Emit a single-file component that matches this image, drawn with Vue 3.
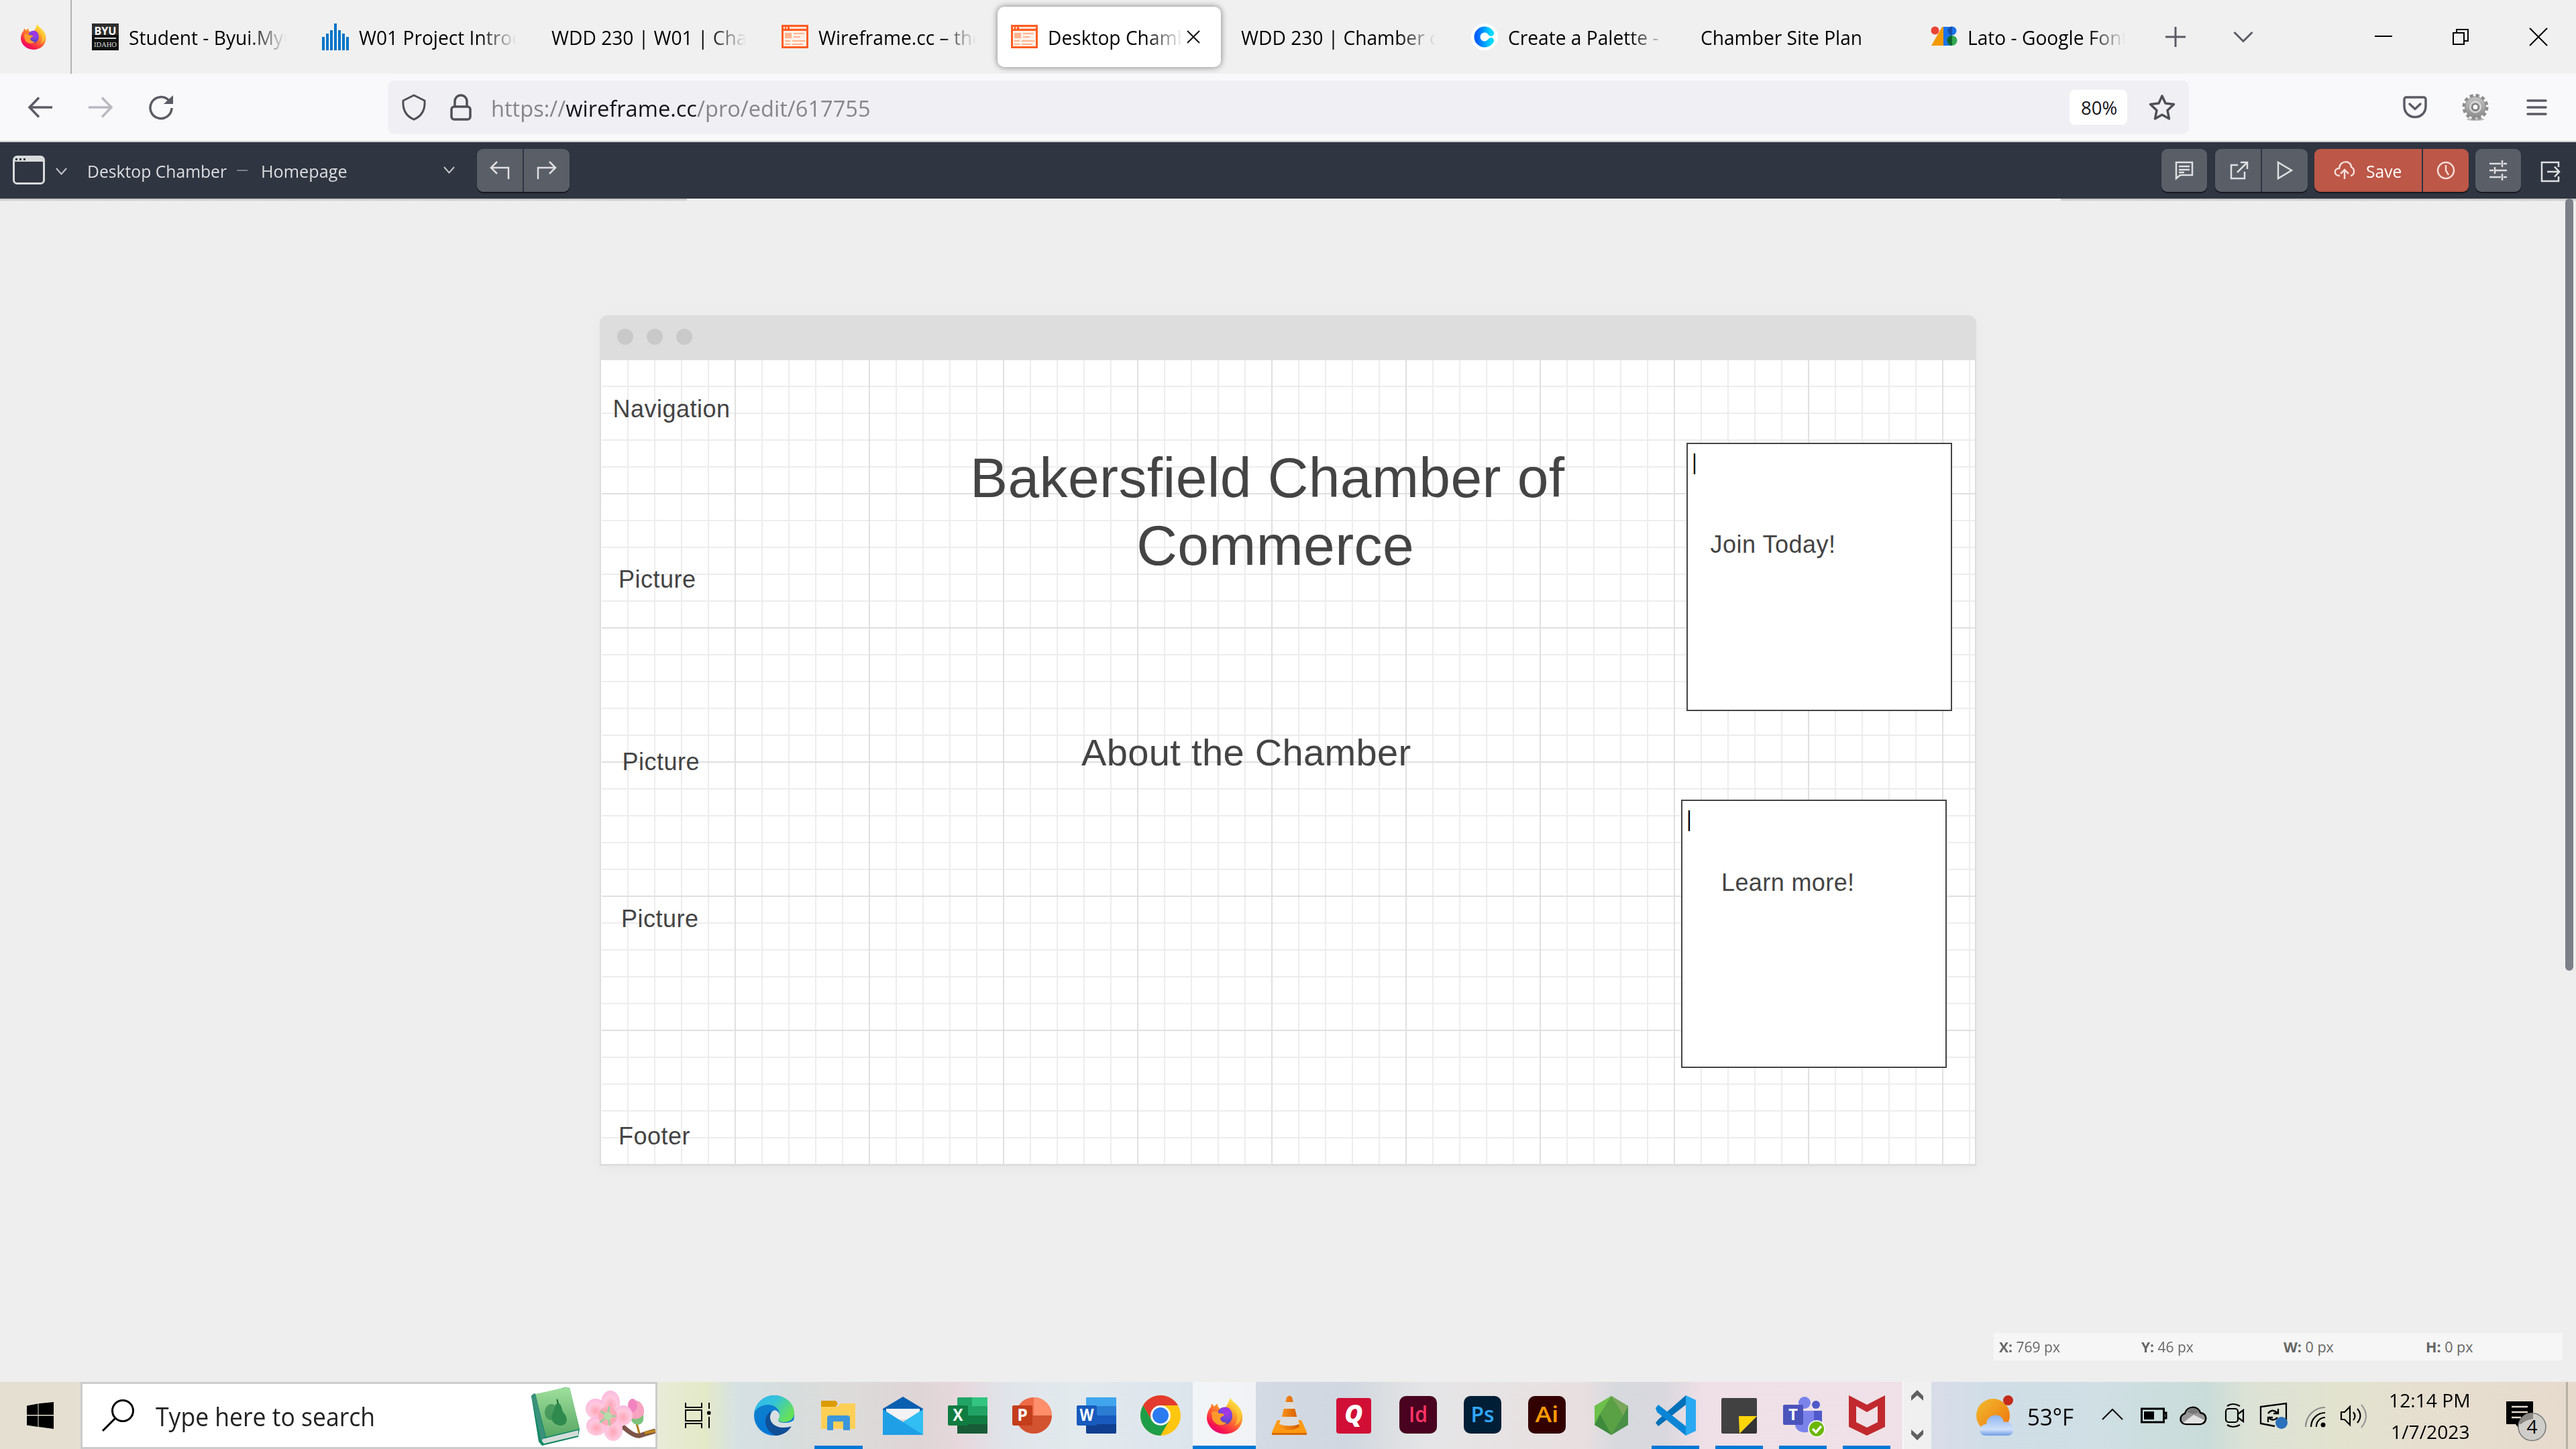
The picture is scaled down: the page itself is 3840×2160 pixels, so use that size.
<script setup>
const tabs = [
  { icon: 'byu', title: 'Student - Byui.MyC' },
  { icon: 'bars', title: 'W01 Project Introd' },
  { icon: '', title: 'WDD 230 | W01 | Char' },
  { icon: 'wire', title: 'Wireframe.cc – the' },
  { icon: 'wire', title: 'Desktop Chamb', active: true },
  { icon: '', title: 'WDD 230 | Chamber of' },
  { icon: 'coolors', title: 'Create a Palette - C' },
  { icon: '', title: 'Chamber Site Plan' },
  { icon: 'gfonts', title: 'Lato - Google Font' },
]

const labels = [
  { text: 'Navigation', x: 17.5, y: 52 },
  { text: 'Picture', x: 26, y: 306 },
  { text: 'Picture', x: 31.5, y: 578 },
  { text: 'Picture', x: 30, y: 812 },
  { text: 'Footer', x: 26, y: 1136 },
]

const coords = [
  { k: 'X:', v: '769 px', w: 91 },
  { k: 'Y:', v: '46 px', w: 78 },
  { k: 'W:', v: '0 px', w: 75 },
  { k: 'H:', v: '0 px', w: 70 },
]

const apps = [
  { id: 'edge' }, { id: 'explorer', open: true }, { id: 'mail' },
  { id: 'excel' },
  { id: 'ppt' },
  { id: 'word' },
  { id: 'chrome' }, { id: 'firefox', current: true }, { id: 'vlc' }, { id: 'quicken' },
  { id: 'adobe', letter: 'Id', bg: '#49021f', fg: '#ff3366' },
  { id: 'adobe', letter: 'Ps', bg: '#001e36', fg: '#31a8ff' },
  { id: 'adobe', letter: 'Ai', bg: '#330000', fg: '#ff9a00' },
  { id: 'node-js' }, { id: 'code', open: true }, { id: 'notes', open: true },
  { id: 'teams', open: true }, { id: 'mcafee', open: true },
]

// Condenses a text run to a given advance width.
const vFit = {
  mounted(el, { value }) {
    const natural = el.offsetWidth
    el.style.transform = `scaleX(${value / natural})`
    el.style.marginRight = `${value - natural}px`
  },
}
</script>

<template>
  <div class="screen">
    <svg width="0" height="0" class="defs">
      <defs>
        <linearGradient id="ffBody" x1=".85" y1=".05" x2=".25" y2="1">
          <stop offset="0" stop-color="#fff44f" /><stop offset=".3" stop-color="#ffb02a" />
          <stop offset=".6" stop-color="#ff5a36" /><stop offset=".85" stop-color="#f6134f" /><stop offset="1" stop-color="#e00087" />
        </linearGradient>
        <radialGradient id="ffGlobe" cx=".6" cy=".25" r=".8">
          <stop offset="0" stop-color="#b833e1" /><stop offset=".5" stop-color="#7a45e0" /><stop offset="1" stop-color="#4a3fb0" />
        </radialGradient>
        <symbol id="firefox" viewBox="0 0 54 54">
          <path d="M35 0c2 5 8 8 12 13 4 5 7 11 6 19-1 13-12 22-26 22S1 44 0 31c0-8 3-14 6-17l1-5c2 1 3 3 4 4 2-2 3-3 5-4 0 3 1 5 3 7 4 0 7 0 9-2 3-3 4-8 7-14z" fill="url(#ffBody)" />
          <path d="M16 25c0-7 5-11 11-11 7 0 11 6 11 13s-5 13-11 13-11-6-11-15z" fill="url(#ffGlobe)" />
          <path d="M7 22c4-3 8-2 11 1 3 1 6 0 8 2-1 3-5 3-6 6 1 4 5 7 10 6-6 7-19 4-22-6z" fill="#ff9a2b" />
          <path d="M22 16c5-3 11-1 14 3-3 0-4 0-6 2-3 0-6-2-8-5z" fill="#9a35e6" />
          <path d="M40 15c7 8 7 20 1 27 12-5 13-18 8-26-3-2-6-2-9-1z" fill="#ffd23e" opacity=".65" />
        </symbol>
        <linearGradient id="edgeA" x1="0" y1="0" x2="1" y2=".5"><stop offset="0" stop-color="#35b8f1" /><stop offset=".5" stop-color="#33c3d8" /><stop offset="1" stop-color="#66e05a" /></linearGradient>
        <linearGradient id="edgeB" x1="0" y1="0" x2=".4" y2="1"><stop offset="0" stop-color="#1581c9" /><stop offset="1" stop-color="#0078d7" /></linearGradient>
        <linearGradient id="coolG" x1="0" x2="1"><stop offset="0" stop-color="#0062ff" /><stop offset="1" stop-color="#00d8ff" /></linearGradient>
        <linearGradient id="sunG" x1="0" y1="0" x2="1" y2="1"><stop offset="0" stop-color="#f2bd2e" /><stop offset="1" stop-color="#ee6f0c" /></linearGradient>
        <linearGradient id="cloudG" x1="0" y1="0" x2="0" y2="1"><stop offset="0" stop-color="#8db4f0" /><stop offset=".7" stop-color="#cfe0fa" /><stop offset="1" stop-color="#6f9be6" /></linearGradient>
        <linearGradient id="coneG" x1="0" x2="1"><stop offset="0" stop-color="#ff9a1c" /><stop offset="1" stop-color="#d45a00" /></linearGradient>
        <linearGradient id="bookG" x1="0" y1="0" x2="0" y2="1"><stop offset="0" stop-color="#9fdf9c" /><stop offset="1" stop-color="#58a763" /></linearGradient>
        <linearGradient id="gearG" x1="0" y1="0" x2="0" y2="1"><stop offset="0" stop-color="#c4c4c4" /><stop offset="1" stop-color="#8c8c8c" /></linearGradient>
        <radialGradient id="petalG" cx=".5" cy=".6" r=".6"><stop offset="0" stop-color="#ffa3b4" /><stop offset=".6" stop-color="#ffc9de" /><stop offset="1" stop-color="#fbb8de" /></radialGradient>
      </defs>
    </svg>

    <!-- Tab strip -->
    <header class="tabstrip">
      <div class="pinned"><svg width="38" height="40"><use href="#firefox" /></svg></div>
      <div class="tabs">
        <div v-for="(t, i) in tabs" :key="i" class="tab" :class="{ active: t.active }">
          <svg v-if="t.icon === 'byu'" class="fav" width="40" height="40">
            <rect width="40" height="40" fill="#111" /><rect width="40" height="17" fill="#2e2e2e" />
            <rect x="4" y="21" width="32" height="2" fill="#ddd" />
            <text x="20" y="17" text-anchor="middle" font-size="16" font-weight="700" fill="#fff" textLength="33" lengthAdjust="spacingAndGlyphs">BYU</text>
            <text x="20" y="35" text-anchor="middle" font-size="11" fill="#ddd" font-family="Liberation Serif, serif" textLength="34" lengthAdjust="spacingAndGlyphs">IDAHO</text>
          </svg>
          <svg v-else-if="t.icon === 'bars'" class="fav" width="40" height="40" fill="#0374c8">
            <path d="M0 20h4v20H0zM6 15h4v25H6zM12 10h4v30h-4zM18 0h4v40h-4zM24 10h4v30h-4zM30 15h4v25h-4zM36 20h4v20h-4z" />
          </svg>
          <svg v-else-if="t.icon === 'wire'" class="fav" width="40" height="36">
            <rect width="40" height="35" fill="#ff5d22" /><rect x="3" y="9" width="34" height="23" fill="#fff0e8" />
            <path d="M3 3h2v3H3zM7 3h2v3H7zM12 3h25v3H12z" fill="#ffe3d6" />
            <path d="M5 12h10v8H5zM18 12h16v2H18zM18 17h10v2H18zM5 23h8v2H5zM16 23h19v2H16zM5 28h8v2H5zM16 28h16v2H16z" fill="#ffb48f" />
          </svg>
          <svg v-else-if="t.icon === 'coolors'" class="fav" width="40" height="40">
            <circle cx="20" cy="20" r="20" fill="#fff" />
            <path d="M29.500 14.500A11 11 0 1 0 29.500 25.500" fill="none" stroke="url(#coolG)" stroke-width="9" stroke-linecap="round" />
          </svg>
          <svg v-else-if="t.icon === 'gfonts'" class="fav" width="40" height="40">
            <path d="M17 5h3v28H15.500L14 33H1z" fill="#f29900" /><circle cx="6.500" cy="10.500" r="6" fill="#ea4335" />
            <path d="M19 5h13v28H19z" fill="#1a73e8" /><circle cx="32" cy="11" r="6.500" fill="#1a73e8" /><path d="M32 4.500a6.500 6.500 0 0 0 0 13z" fill="#174ea6" />
            <circle cx="32" cy="25.500" r="7.500" fill="#34a853" /><path d="M32 18a7.500 7.500 0 0 0 0 15z" fill="#0d652d" />
          </svg>
          <div class="title"><span>{{ t.title }}</span></div>
          <svg v-if="t.active" class="x" width="20" height="20" stroke="#111" stroke-width="2"><path d="M1 1l18 18M19 1L1 19" /></svg>
        </div>
      </div>
      <svg class="plus" width="30" height="30" stroke="#5b5b66" stroke-width="3"><path d="M15 0v30M0 15h30" /></svg>
      <svg class="alltabs" width="30" height="18" fill="none" stroke="#5b5b66" stroke-width="3"><path d="M1.500 2L15 15.500 28.500 2" /></svg>
      <svg class="min" width="26" height="26" stroke="#000" stroke-width="2"><path d="M0 12h26" /></svg>
      <svg class="restore" width="24" height="26" fill="none" stroke="#000" stroke-width="2"><path d="M1 7h16v17H1zM6 7V2h17v17h-6" /></svg>
      <svg class="close" width="26" height="26" stroke="#000" stroke-width="2"><path d="M0 0l26 26M26 0L0 26" /></svg>
    </header>

    <!-- Navigation bar -->
    <nav class="navbar">
      <svg class="back" width="36" height="32" fill="none" stroke="#5b5b66" stroke-width="3.500"><path d="M36 16H3M16 1.500L2 16l14 14.500" /></svg>
      <svg class="fwd" width="36" height="32" fill="none" stroke="#b9b9c0" stroke-width="3.500"><path d="M0 16h33M20 1.500L34 16 20 30.500" /></svg>
      <svg class="reload" width="38" height="38" viewBox="0 0 38 38"><path d="M35 20A16 16 0 1 1 31 9" fill="none" stroke="#5b5b66" stroke-width="3.500" /><path d="M37 1v13H23z" fill="#5b5b66" /></svg>
      <div class="urlbar">
        <svg width="36" height="40" fill="none" stroke="#4f4f57" stroke-width="3" stroke-linejoin="round"><path d="M18 2l16 8c1 14-4 23-16 28C6 33 1 24 2 10z" /></svg>
        <svg class="lock" width="32" height="40" fill="none" stroke="#4f4f57" stroke-width="3.500"><rect x="2" y="19" width="28" height="19" rx="4" /><path d="M7 19v-8a9 9 0 0 1 18 0v8" /></svg>
        <span v-fit="566" class="url">https://<b>wireframe.cc</b>/pro/edit/617755</span>
        <span class="zoom"><span v-fit="54">80%</span></span>
        <svg width="40" height="40" fill="none" stroke="#4f4f57" stroke-width="3.500" stroke-linejoin="round"><path d="M20 3l5 11 12.500 1.500-9.500 9 2.500 12.500L20 31 9.500 37 12 24.500l-9.500-9L15 14z" /></svg>
      </div>
      <svg class="pocket" width="36" height="34" fill="none" stroke="#5b5b66" stroke-width="3.500" stroke-linecap="round" stroke-linejoin="round"><path d="M5 2h26a3 3 0 0 1 3 3v10c0 22-32 22-32 0V5a3 3 0 0 1 3-3z" /><path d="M10 12l8 7.500 8-7.500" /></svg>
      <svg class="gear" width="40" height="40" viewBox="0 0 40 40">
        <ellipse cx="20" cy="38" rx="13" ry="2" fill="#bbb" />
        <circle cx="20" cy="19.500" r="16.500" fill="none" stroke="#8d8d8d" stroke-width="6" stroke-dasharray="5 3.640" />
        <circle cx="20" cy="19.500" r="15.500" fill="url(#gearG)" stroke="#8a8a8a" /><circle cx="20" cy="19.500" r="8" fill="none" stroke="#dedede" stroke-width="2" />
        <circle cx="20" cy="19.500" r="4.500" fill="#fff" stroke="#777" stroke-width="2" />
      </svg>
      <svg class="burger" width="30" height="26" stroke="#5b5b66" stroke-width="3.500" stroke-linecap="round"><path d="M2 3h27M2 13h27M2 23h27" /></svg>
    </nav>

    <!-- Editor toolbar -->
    <div class="toolbar">
      <svg class="win" width="48" height="44"><rect x="1.500" y="1.500" width="45" height="40" rx="5" fill="none" stroke="#d9dadc" stroke-width="3" /><path d="M1 9V6a5 5 0 0 1 5-5h36a5 5 0 0 1 5 5v3z" fill="#d9dadc" /><path d="M4 4h3v3H4zM10 4h3v3h-3zM16 4h3v3h-3z" fill="#2f3541" /></svg>
      <svg class="c1" width="17" height="12" fill="none" stroke="#c5c7ca" stroke-width="2"><path d="M1 1l7.500 8.500L16 1" /></svg>
      <span class="proj"><span v-fit="208">Desktop Chamber</span></span>
      <i class="dash"></i>
      <span class="page"><span v-fit="129">Homepage</span></span>
      <svg class="c2" width="17" height="12" fill="none" stroke="#c5c7ca" stroke-width="2"><path d="M1 1l7.500 8.500L16 1" /></svg>
      <div class="group undo">
        <div class="btn"><svg width="30" height="28"><path d="M28 27V10H2M11 1L2 10l9 9" /></svg></div>
        <div class="btn"><svg width="30" height="28"><path d="M2 27V10h26M19 1l9 9-9 9" /></svg></div>
      </div>
      <div class="spacer"></div>
      <div class="group"><div class="btn"><svg width="28" height="28"><path d="M2 2h24v19H8l-6 5zM6 8h16M6 13h16M6 17h8" /></svg></div></div>
      <div class="group g2">
        <div class="btn lead"><svg width="28" height="28"><path d="M12 6H2v20h20V16M11 17L26 2M16 2h10v10" /></svg></div>
        <div class="btn"><svg width="28" height="28"><path d="M4 2l20 12L4 26z" /></svg></div>
      </div>
      <div class="group g3">
        <div class="btn red save"><svg width="32" height="28"><path d="M9 22C-1 22 0 11 8 11 9-2 26-1 26 9c6 3 5 12-1 13M16 27V14M10 19l6-6 6 6" /></svg><span v-fit="53">Save</span></div>
        <div class="btn red"><svg width="28" height="28"><circle cx="14" cy="14" r="12" /><path d="M14 6v8l4 7" /></svg></div>
      </div>
      <div class="group g4"><div class="btn"><svg width="28" height="30"><path d="M1 5h17M22 5h5M20 0v10M1 15h6M10 15h17M9 10v10M1 25h17M22 25h5M20 20v10" /></svg></div></div>
      <svg class="exit" width="30" height="32"><path d="M27 9V2H2v28h25v-7M10 16h18M21 8.500l7 7.500-7 7.500" /></svg>
    </div>

    <!-- Workspace -->
    <main class="workspace">
      <i class="shade left"></i><i class="shade right"></i><i class="scroll"></i>
      <section class="frame">
        <div class="titlebar"><i></i><i></i><i></i></div>
        <div class="canvas">
          <div v-for="(l, i) in labels" :key="i" class="node" :style="{ left: l.x + 'px', top: l.y + 'px' }">{{ l.text }}</div>
          <h1 class="node h1">Bakersfield Chamber of {{ '\n' }}Commerce</h1>
          <h2 class="node h2">About the Chamber</h2>
          <div class="box b1"><i></i></div>
          <div class="node join">Join Today!</div>
          <div class="box b2"><i></i></div>
          <div class="node learn">Learn more!</div>
        </div>
      </section>
      <div class="status">
        <div v-for="c in coords" :key="c.k"><span v-fit="c.w"><b>{{ c.k }}</b> {{ c.v }}</span></div>
      </div>
    </main>

    <!-- Taskbar -->
    <footer class="taskbar">
      <div class="start"><svg width="40" height="40"><path d="M0 5.500l16.500-3V19H0zM17.500 2.300L40 0v19H17.500zM0 20.500h16.500V37L0 34.500zM17.500 20.500H40V40l-22.500-3z" /></svg></div>
      <div class="search">
        <svg width="48" height="48" fill="none" stroke="#000" stroke-width="3"><circle cx="31" cy="17" r="15.500" /><path d="M20 28L1 47" /></svg>
        <span v-fit="327" class="ph">Type here to search</span>
        <svg class="art" width="186" height="90" viewBox="0 0 186 90">
          <path d="M1 16L52 3l6 1 15 61-2 12-54 13-5-6z" fill="#0f8765" />
          <path d="M7 13L54 3q4 0 5 4l14 58-50 12z" fill="url(#bookG)" /><path d="M1 16q1-3 6-4l15 65q-5 2-6 8z" fill="#38917a" />
          <path d="M18 80l53-13v8L20 87q-5-4-2-7z" fill="#d4dcd8" />
          <ellipse cx="31" cy="40" rx="10" ry="12" fill="#287e46" opacity=".6" /><path d="M41 27c6 0 4 9 9 15 7 8 4 18-5 18-10 0-17-9-12-18 4-7 2-15 8-15z" fill="#2f8a4e" /><path d="M41 28q-1-6-2-7" stroke="#1c6136" stroke-width="2" fill="none" />
          <path d="M137 61q17 16 26 14 12-4 23-7" fill="none" stroke="#7d5548" stroke-width="7" /><path d="M162 72q-2-8-4-15" fill="none" stroke="#b07a1c" stroke-width="3" /><path d="M170 71l16-3" stroke="#c08a1a" stroke-width="4" />
          <ellipse cx="157" cy="39" rx="12" ry="16" fill="#f7a3c0" /><ellipse cx="152" cy="30" rx="7" ry="10" fill="#f184c0" /><path d="M148 47q10 8 20-3 2 14-9 15-8-1-11-12z" fill="#7cc37b" />
          <g fill="url(#petalG)"><ellipse cx="119" cy="26" rx="14" ry="18" /><ellipse cx="97" cy="35" rx="15" ry="15" /><ellipse cx="138" cy="45" rx="14" ry="15" /><ellipse cx="98" cy="61" rx="15" ry="14" /><ellipse cx="123" cy="66" rx="14" ry="17" /></g>
          <circle cx="115" cy="46" r="14" fill="#ffa9b6" /><g stroke="#9bcf9e" stroke-width="3" stroke-linecap="round"><path d="M115 46l2-13M115 46l-10-7M115 46l-11 9M115 46l3 13M115 46h11" /></g><circle cx="115" cy="46" r="6" fill="#b3dca9" />
        </svg>
      </div>
      <div class="taskview"><svg width="38" height="38" fill="none" stroke="#000" stroke-width="2"><path d="M1 0v7h24V0M1 11h24v16H1zM1 38v-7h24v7M36 0v9M36 21v17" /><rect x="33" y="12.500" width="5.500" height="5.500" rx="2" fill="#000" stroke="none" /></svg></div>

      <div class="apps">
        <div v-for="(a, i) in apps" :key="i" class="app" :class="['app-' + a.id, { open: a.open, current: a.current }]">
          <svg v-if="a.id === 'edge'" width="60" height="60" viewBox="0 0 60 60">
            <circle cx="30" cy="30" r="30" fill="url(#edgeB)" />
            <path d="M0 27C2 11 15 0 30 0c17 0 30 12 30 26 0 9-7 14-15 14-5 0-9-2-9-4 0-2 2-3 2-8 0-8-8-14-17-14C11 14 2 20 0 27z" fill="url(#edgeA)" />
            <path d="M25 24c-6 4-8 10-8 15 0 9 6 17 15 21 11 0 21-7 24-15-13 7-31 1-31-21z" fill="#0f4f97" />
            <path d="M24 33c0-6 3-10 7-11 4 1 7 4 7 8 0 4-2 5-2 7 1 3 5 4 10 4s9-1 13-4l1 4-4 5c-3 1-7 2-13 2-11 0-19-7-19-15z" fill="#d9dfe0" />
          </svg>
          <svg v-else-if="a.id === 'explorer'" width="54" height="46" viewBox="0 0 54 46">
            <path d="M1 1h22l3 4-3 5H1z" fill="#dc9b00" /><path d="M1 10h24l5-5h22v38H1z" fill="#fdcf57" />
            <path d="M10 45V27q0-4 4-4h26q4 0 4 4v18H34V32H19v13z" fill="#3b96dd" />
          </svg>
          <svg v-else-if="a.id === 'mail'" width="60" height="57" viewBox="0 0 60 57">
            <path d="M30 0l30 18v4H0v-4z" fill="#0a5fb0" /><path d="M5 18h50v16H5z" fill="#f3f3f5" /><path d="M0 19l30 19 30-19v38H0z" fill="#1fa4e8" /><path d="M30 38l30-19v38z" fill="#32bdf3" /><path d="M0 19v38h60L30 38z" fill="#1f9fe6" />
          </svg>
          <svg v-else-if="a.id === 'excel'" width="59" height="54" viewBox="0 0 59 54">
            <rect x="14" width="45" height="54" rx="2" fill="#21a366" /><path d="M36 0h23v13H36z" fill="#33c481" /><path d="M14 27h22v14H14z" fill="#107c41" /><path d="M36 27h23v14H36z" fill="#107c41" /><path d="M14 40h45v14H14z" fill="#185c37" />
            <rect y="12" width="30" height="30" rx="2" fill="#107c41" /><text x="15" y="35" class="tag" textLength="15" lengthAdjust="spacingAndGlyphs">X</text>
          </svg>
          <svg v-else-if="a.id === 'ppt'" width="59" height="54" viewBox="0 0 59 54">
            <circle cx="32" cy="27" r="27" fill="#ed6c47" /><path d="M32 0a27 27 0 0 1 27 27H32z" fill="#ff8f6b" /><path d="M5 27h54a27 27 0 0 1-54 0z" fill="#d35230" />
            <rect y="12" width="30" height="30" rx="2" fill="#c43e1c" /><text x="15" y="35" class="tag">P</text>
          </svg>
          <svg v-else-if="a.id === 'word'" width="59" height="54" viewBox="0 0 59 54">
            <rect x="14" width="45" height="54" rx="2" fill="#2b7cd3" /><path d="M14 2q0-2 2-2h41q2 0 2 2v11H14z" fill="#41a5ee" /><path d="M14 27h45v14H14z" fill="#185abd" /><path d="M14 40h45v12q0 2-2 2H16q-2 0-2-2z" fill="#103f91" />
            <rect y="12" width="30" height="30" rx="2" fill="#185abd" /><text x="15" y="35" class="tag" textLength="21" lengthAdjust="spacingAndGlyphs">W</text>
          </svg>
          <svg v-else-if="a.id === 'chrome'" width="60" height="60" viewBox="0 0 60 60">
            <circle cx="30" cy="30" r="30" fill="#ffc60f" /><path d="M4 15A30 30 0 0 1 56 15H30L17 37.500z" fill="#e33b2e" /><path d="M4 15l13 22.500L30 45l6 0-6 15A30 30 0 0 1 4 15z" fill="#1e9e48" /><path d="M43 37.500L30 60 24 43z" fill="#1e9e48" />
            <circle cx="30" cy="30" r="15" fill="#fff" /><circle cx="30" cy="30" r="12" fill="#2b7bf0" />
          </svg>
          <svg v-else-if="a.id === 'firefox'" width="54" height="55"><use href="#firefox" /></svg>
          <svg v-else-if="a.id === 'vlc'" width="52" height="60" viewBox="0 0 52 60">
            <path d="M8 37h36l8 18v4H0v-4z" fill="#ff9a12" /><path d="M0 56h52v3H0z" fill="#d66a00" />
            <path d="M22 3q4-5 8 0l11 44q-15 9-30 0z" fill="url(#coneG)" /><path d="M20 10h12l3 10H17zM14 32h24l3 11q-15 5-30 0z" fill="#dcdcdc" />
          </svg>
          <svg v-else-if="a.id === 'quicken'" width="52" height="53"><rect width="52" height="53" rx="4" fill="#d10f36" /><text x="26" y="37" text-anchor="middle" font-size="37" font-weight="800" font-style="italic" fill="#fff">Q</text></svg>
          <svg v-else-if="a.id === 'adobe'" width="56" height="56"><rect width="56" height="56" rx="10" :fill="a.bg" /><text x="28" y="39" text-anchor="middle" font-size="33" font-weight="600" :fill="a.fg" :textLength="a.letter === 'Id' ? 28 : 35" lengthAdjust="spacingAndGlyphs">{{ a.letter }}</text></svg>
          <svg v-else-if="a.id === 'node-js'" width="50" height="58" viewBox="0 0 50 58"><path d="M25 0l25 15v28L25 58 0 43V15z" fill="#5aa045" /><path d="M25 0L0 15v28l8-16z" fill="#6cc04a" /><path d="M0 43l8-16 17 31z" fill="#3e8a3d" /><path d="M25 0l25 15-7 14z" fill="#7aa75c" /><path d="M50 15v28L25 58l18-29z" fill="#4a8f48" /></svg>
          <svg v-else-if="a.id === 'code'" width="60" height="60" viewBox="0 0 60 60"><path d="M0 41l4 5 41-32V0L4 36z" fill="#0070b8" /><path d="M0 19l4-5 41 32v14L2 25z" fill="#0b86d6" /><path d="M45 0l15 7v46l-15 7z" fill="#29a9f2" /></svg>
          <svg v-else-if="a.id === 'notes'" width="53" height="53"><path d="M2 0h49q2 0 2 2v25L27 53H2q-2 0-2-2V2q0-2 2-2z" fill="#414141" /><path d="M27 53L53 27v24q0 2-2 2z" fill="#333" /><path d="M26 27h27L27 53z" fill="#ffd60a" /></svg>
          <svg v-else-if="a.id === 'teams'" width="65" height="62" viewBox="0 0 65 62">
            <circle cx="49" cy="12" r="6" fill="#5059c9" /><path d="M40 21h18v17q-3 8-12 7z" fill="#5059c9" /><circle cx="32" cy="9" r="9" fill="#7b83eb" /><path d="M18 21h28v21c0 15-27 15-28 0z" fill="#7b83eb" />
            <rect y="12" width="30" height="30" rx="2" fill="#4b53bc" /><text x="15" y="35" class="tag sm">T</text>
            <circle cx="50" cy="48" r="13" fill="#f3f3f3" /><circle cx="50" cy="48" r="11" fill="#6bb700" /><path d="M44 48l5 5 8-9" stroke="#fff" stroke-width="3.500" fill="none" />
          </svg>
          <svg v-else width="54" height="60" viewBox="0 0 54 60"><path d="M0 0l27 14L54 0v47L27 60 0 47zM11 16v24l16 8 16-8V16L27 25z" fill="#c1292e" fill-rule="evenodd" /></svg>
        </div>
      </div>

      <div class="arrows">
        <svg width="18" height="16"><path d="M9 0l9 9v7L9 8l-9 8V9z" fill="#606060" /></svg>
        <svg width="18" height="16"><path d="M9 16l9-9V0L9 8 0 0v7z" fill="#606060" /></svg>
      </div>

      <div class="tray">
        <svg class="sun" width="56" height="60" viewBox="0 0 56 60"><circle cx="25" cy="30" r="25" fill="url(#sunG)" /><path d="M14 60C2 60 3 43 15 43c0-16 24-19 26-3 16-4 19 20 6 20z" fill="url(#cloudG)" /><circle cx="47.500" cy="7.500" r="7.500" fill="#c42b1c" /></svg>
        <span class="temp"><span v-fit="69">53°F</span></span>
        <svg class="up" width="32" height="18" fill="none" stroke="#000" stroke-width="2"><path d="M1 17L16 2l15 15" /></svg>
        <svg class="batt" width="38" height="24"><path d="M1.500 2h33v20h-33zM36 8h2v8h-2" fill="none" stroke="#000" stroke-width="3" /><path d="M5 6h15v12H5z" /></svg>
        <svg class="cloud" width="41" height="29" viewBox="0 0 41 29"><path d="M10 27C-1 27-1 14 8 11 11-1 28-1 31 10c11 1 11 16 0 17z" fill="#999" stroke="#000" stroke-width="2.500" /><path d="M20 12l-9-3Q20-2 30 9z" fill="#777" /><path d="M5 25l16-12 16 8q-3 5-7 5H10z" fill="#e3e3e3" /></svg>
        <svg class="cam" width="30" height="38" fill="none" stroke="#000" stroke-width="2.200"><rect x="1" y="9" width="18" height="20" rx="4" /><path d="M19 17l8-6v17l-8-6M3 5q8-6 19 0M3 33q8 6 19 0" /></svg>
        <svg class="sync" width="42" height="41" fill="none" stroke="#000" stroke-width="2.300"><path d="M22 36L1 32V7l38-5v26M12 17q6-8 14-1M27 10v7h-7M26 23q-7 7-13 0M12 30v-7h7" /><circle cx="32" cy="31" r="9" fill="#2c6fbb" stroke="none" /></svg>
        <svg class="wifi" width="32" height="32" fill="none" stroke="#000" stroke-width="2.200"><path d="M1 31A29 29 0 0 1 30 2" stroke="#888" /><path d="M9 31A21 21 0 0 1 30 10M17 31A13 13 0 0 1 30 17" /><circle cx="27" cy="28" r="3.500" fill="#000" stroke="none" /></svg>
        <svg class="vol" width="42" height="37" fill="none" stroke="#000" stroke-width="2.200"><path d="M2 13h5l8-8v27l-8-8H2zM20 13q5 6 0 12M26 8q9 10 0 21" /><path d="M32 2q14 17 0 34" stroke="#999" /></svg>
        <div class="clock"><div><span v-fit="122">12:14 PM</span></div><div><span v-fit="118">1/7/2023</span></div></div>
        <svg class="notif" width="62" height="62" viewBox="0 0 62 62"><path d="M0 0h40v34H20l0 8-6-8H0z" /><path d="M8 8h24M8 16h24M8 24h14" stroke="#e6dbd0" stroke-width="2.500" /><circle cx="38.500" cy="38" r="20.500" fill="#cfcdc9" stroke="#777" stroke-width="1.500" /><path d="M19 33a20 20 0 0 1 21-15v8q-12 2-18 8z" fill="#8b8884" /><text x="38.500" y="48" text-anchor="middle" font-size="28">4</text></svg>
        <i class="peek"></i>
      </div>
    </footer>
  </div>
</template>

<style>
body { margin: 0; overflow: hidden; }
</style>

<style scoped>
.screen { width: 3840px; height: 2160px; display: flex; flex-direction: column; overflow: hidden; background: #eee; font-family: "Open Sans", "Noto Sans", sans-serif; color: #000; }
.defs { position: absolute; }
svg { display: block; flex: none; overflow: visible; }
span { display: inline-block; white-space: nowrap; transform-origin: 0 50%; }
i { display: block; font-style: normal; }

.tabstrip { height: 110px; flex: none; display: flex; align-items: center; background: #f0f0f0; }
.pinned { box-sizing: border-box; width: 107px; height: 110px; border-right: 2px solid #b3b3b3; display: flex; align-items: center; padding-left: 31px; }
.tabs { display: flex; margin-left: 10px; }
.tab { box-sizing: border-box; width: 333px; height: 90px; margin-right: 9.600px; padding: 0 23px 0 20px; display: flex; align-items: center; border-radius: 10px; font-size: 30px; line-height: 50px; }
.tab.active { background: #fff; box-shadow: 0 0 10px rgba(0, 0, 0, .5); }
.fav { margin-right: 15px; }
.title { flex: 1; min-width: 0; padding-top: 2px; overflow: hidden; -webkit-mask-image: linear-gradient(to left, transparent, #000 55px); mask-image: linear-gradient(to left, transparent, #000 55px); }
.title span { transform: scaleX(.938); }
.tab.active { padding-right: 31px; }
.tab .x { margin-left: 6px; }
.plus { margin-left: 28px; }
.alltabs { margin-left: 71px; }
.min { margin-left: 181px; }
.restore { margin-left: 90px; }
.close { margin-left: 91px; }

.navbar { height: 100px; flex: none; display: flex; align-items: center; background: #f9f9fb; border-bottom: 2px solid #cccccf; }
.back { margin-left: 42px; }
.fwd { margin-left: 54px; }
.reload { margin-left: 53px; }
.urlbar { box-sizing: border-box; width: 2685px; height: 80px; margin-left: 319px; padding-left: 21px; padding-right: 20px; border-radius: 10px; background: #f0f0f4; display: flex; align-items: center; }
.lock { margin-left: 36px; }
.url { margin-left: 29px; padding-top: 2px; font-size: 33px; color: #85858b; }
.url b { font-weight: 400; color: #15141a; }
.zoom { margin-left: auto; margin-right: 32px; box-sizing: border-box; width: 86px; height: 52px; line-height: 54px; padding-left: 17px; border-radius: 8px; background: #fff; font-size: 27.500px; color: #15141a; }
.pocket { margin-left: 319px; }
.gear { margin-left: 52px; }
.burger { margin-left: 56px; }

.toolbar { height: 84px; flex: none; display: flex; align-items: center; background: #2f3541; color: #dcdde0; font-size: 26px; }
.toolbar span { padding-top: 1px; }
.win { margin-left: 19px; }
.c1 { margin-left: 16px; margin-top: 4px; }
.proj { margin-left: 30px; }
.dash { width: 16px; height: 2px; margin-left: 15px; background: #7d8189; }
.page { margin-left: 20px; width: 129px; }
.c2 { margin-left: 143px; }
.group { display: flex; gap: 2px; height: 64px; border-radius: 9px; overflow: hidden; box-shadow: 0 2px 1px #15181e; }
.undo { margin-left: 33px; }
.btn { width: 68px; height: 64px; background: #5a5e67; display: flex; align-items: center; justify-content: center; }
.btn.lead { box-sizing: border-box; padding-left: 4px; }
.btn svg, .exit { fill: none; stroke: #dfe0e2; stroke-width: 2.500; }
.btn.red { background: #bd5747; color: #fff; }
.btn.red svg { stroke: #f6dcd8; }
.btn.save { width: 160px; gap: 16px; }
.spacer { flex: 1; }
.g2 { margin-left: 12px; }
.g3 { margin-left: 10px; }
.g4 { margin-left: 10px; }
.exit { margin: 4px 23px 0 29px; }

.workspace { position: relative; height: 1764px; flex: none; display: flex; flex-direction: column; background: #eee; }
.shade { position: absolute; top: 0; height: 4px; background: linear-gradient(#bdbdbd, #e6e6e6); }
.shade.left { left: 0; width: 1024px; }
.shade.right { left: 3072px; right: 0; }
.scroll { position: absolute; left: 3824px; top: 0; width: 12px; height: 1151px; border-radius: 6px; background: #7b7f88; }
.frame { width: 2052px; margin: 174px auto 0; border-radius: 12px 12px 0 0; background: #ddd; box-shadow: 0 4px 20px rgba(0, 0, 0, .035); }
.titlebar { height: 66px; display: flex; align-items: center; gap: 20px; padding-left: 26px; }
.titlebar i { width: 24px; height: 24px; margin-top: -2px; border-radius: 50%; background: #c9c9c9; }
.canvas {
  position: relative; width: 2048px; height: 1199px; margin: 0 2px; border-bottom: 3px solid #dedede; overflow: hidden; background-color: #fff;
  background-image:
    linear-gradient(to right, #e0e0e0 2px, transparent 2px),
    linear-gradient(to bottom, #e0e0e0 2px, transparent 2px),
    linear-gradient(to right, #ededed 2px, transparent 2px),
    linear-gradient(to bottom, #ededed 2px, transparent 2px);
  background-size: 200px 200px, 200px 200px, 40px 40px, 40px 40px;
  background-position: 199px 0, 0 199px, 39px 0, 0 39px;
}
.canvas::before { content: ""; position: absolute; inset: 0 auto auto 0; width: 1px; height: 100%; background: #fff; }
.node { position: absolute; margin: 0; font: 400 36px/1.2 "Liberation Sans", Arial, sans-serif; letter-spacing: .5px; color: #444; white-space: pre; }
.h1 { left: 550px; top: 126px; font-size: 84px; text-align: center; letter-spacing: .4px; }
.h2 { left: 716px; top: 552px; font-size: 56px; letter-spacing: .35px; }
.join { left: 1653.500px; top: 254px; }
.learn { left: 1670px; top: 758px; letter-spacing: .4px; }
.box { position: absolute; box-sizing: border-box; width: 396px; height: 400px; border: 2px solid #444; background: #fff; padding: 14px 9px; }
.box i { width: 2px; height: 31px; background: #00001e; box-shadow: -1px 0 #ffb56b, 1px 0 #9fe6ff; }
.b1 { left: 1618px; top: 124px; }
.b2 { left: 1610px; top: 656px; }
.status { box-sizing: border-box; width: 848px; height: 41px; margin: auto 20px 32px auto; padding-left: 8px; display: flex; align-items: center; background: #f6f6f6; color: #666; font-size: 21.500px; line-height: 42px; }
.status > div { flex: none; width: 212px; }
.status > div:last-child { width: 190px; }

.taskbar {
  height: 100px; flex: none; display: flex; align-items: center;
  background: linear-gradient(to right, #e5dfd2 0, #e5dfd2 120px, #e8ecd8 980px, #e4e9c8 1050px, #d6e1e4 1100px, #d6dddd 1170px, #dcdcdb 1240px, #dfd5d6 1370px, #e6d8dc 1430px, #e0e4ea 1500px, #e2eaee 1600px, #dde5ed 1760px, #d3d9e3 1900px, #d0d7e0 2010px, #dcdfe2 2070px, #e5e5e7 2130px, #e8e1e1 2300px, #e8dfe0 2360px, #d6d9de 2410px, #d9d8de 2480px, #eee0e6 2540px, #efe1e7 2836px, #dadde9 2879px, #d0dde7 2960px, #cfdfe4 3130px, #cadcd9 3290px, #dce2d6 3350px, #e2e3cf 3480px, #e6dfd0 3600px, #e6dacd 3840px);
}
.start { width: 80px; padding-left: 40px; }
.search { box-sizing: border-box; width: 860px; height: 100px; border: 3px solid #ccc; background: #fff; display: flex; align-items: center; padding-left: 29px; overflow: hidden; }
.ph { margin-left: 32px; font-size: 37.500px; color: #222; padding-top: 3px; }
.art { margin-left: auto; }
.taskview { width: 126px; box-sizing: border-box; padding-left: 41px; }
.apps { display: flex; align-self: stretch; }
.app { position: relative; width: 96px; display: flex; align-items: center; justify-content: center; }
.app:nth-child(n+15) { width: 95px; }
.app-adobe svg { margin-top: -3px; }
.app-teams svg { margin: 6px -3px 0 3px; }
.app.current { background: linear-gradient(rgba(255, 255, 255, .65) 0 0) 0 0 / 94px 100% no-repeat; }
.app.open::after, .app.current::after { content: ""; position: absolute; bottom: 0; left: 12px; right: 12px; height: 5px; background: #0078d7; }
.app.current::after { left: 0; right: 2px; }
.tag { font-size: 25px; font-weight: 700; fill: #fff; text-anchor: middle; }
.tag.sm { font-size: 24px; }
.arrows { width: 43px; height: 100px; margin-left: 6px; box-sizing: border-box; border-left: 1px solid #fff; background: #f0f0f0; display: flex; flex-direction: column; align-items: center; justify-content: space-between; padding: 12px 0 13px; }

.tray { flex: 1; display: flex; align-items: center; align-self: stretch; }
.sun { margin-left: 67px; }
.temp { width: 69px; margin-left: 20px; padding-top: 3px; font-size: 34px; }
.up { margin-left: 42px; margin-top: -5px; }
.batt { margin-left: 26px; }
.cloud { margin-left: 20px; }
.cam { margin-left: 27px; }
.sync { margin-left: 22px; }
.wifi { margin-left: 25px; margin-top: 4px; }
.vol { margin-left: 20px; }
.clock { width: 124px; margin-left: 31px; font-size: 28px; line-height: 47px; padding-top: 2px; text-align: left; }
.clock div + div { padding-left: 3px; }
.notif { margin-left: 51px; margin-top: 19px; }
.peek { width: 3px; height: 100px; margin-left: 27px; background: #b9b0a6; }
</style>
